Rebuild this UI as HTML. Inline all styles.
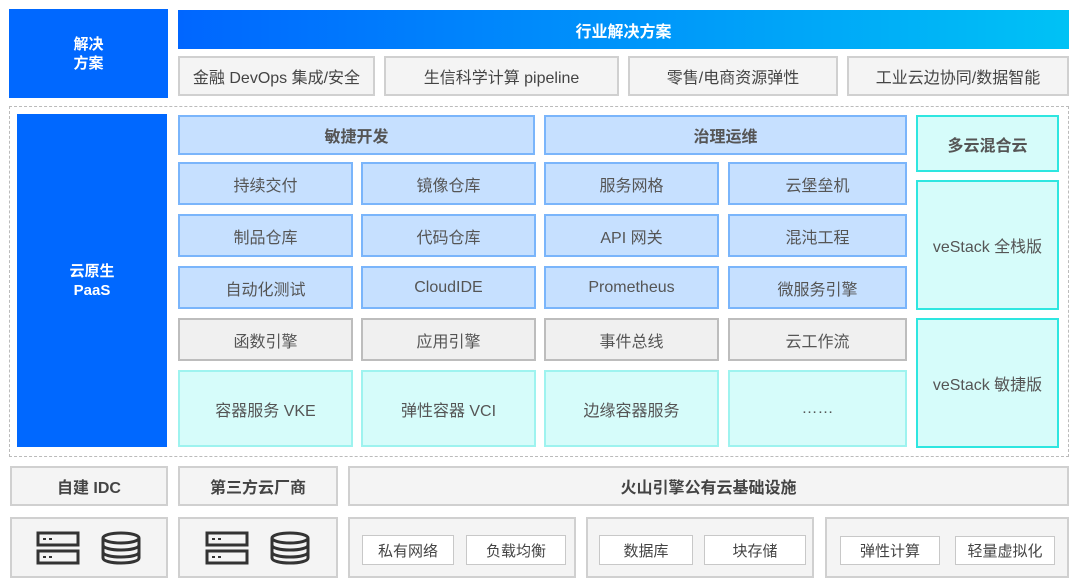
<!DOCTYPE html><html><head><meta charset="utf-8"><style>
*{margin:0;padding:0;box-sizing:border-box}
body{width:1080px;height:587px;background:#fff;position:relative;overflow:hidden;font-family:"Liberation Sans","Noto Sans CJK SC",sans-serif;color:#444}
.b{position:absolute;display:flex;align-items:center;justify-content:center;text-align:center;font-size:16px}
.blue{background:#0068ff;color:#fff;font-weight:bold;font-size:15px;line-height:19px}
.g{background:#f4f4f4;border:2px solid #d0d0d0;color:#444}
.lb{background:#c6e0ff;border:2px solid #7ab5fb;color:#555}
.cy{background:#d6fcfa;border:2px solid #2ee6e0;color:#555}
.cy2{background:#d6fcfa;border:2px solid #9ef3ef;color:#555}
.gr{background:#f0f0f0;border:2px solid #bdbdbd;color:#555}
.bd{font-weight:bold}
.w{background:#fff;border:1px solid #c8c8c8;font-size:15px}
</style></head><body>
<div class="b blue" style="left:9px;top:9px;width:159px;height:89px">解决<br>方案</div>
<div class="b" style="left:178px;top:10px;width:891px;height:39px;background:linear-gradient(90deg,#0066ff,#00c2f5);color:#fff;font-weight:bold;font-size:16px">行业解决方案</div>
<div class="b g" style="left:178px;top:56px;width:197px;height:40px">金融 DevOps 集成/安全</div>
<div class="b g" style="left:384px;top:56px;width:235px;height:40px">生信科学计算 pipeline</div>
<div class="b g" style="left:628px;top:56px;width:210px;height:40px">零售/电商资源弹性</div>
<div class="b g" style="left:847px;top:56px;width:222px;height:40px">工业云边协同/数据智能</div>
<div style="position:absolute;left:9px;top:106px;width:1060px;height:351px;border:1px dashed #bbb"></div>
<div class="b blue" style="left:17px;top:114px;width:150px;height:333px">云原生<br>PaaS</div>
<div class="b lb bd" style="left:178px;top:115px;width:357px;height:40px">敏捷开发</div>
<div class="b lb bd" style="left:544px;top:115px;width:363px;height:40px">治理运维</div>
<div class="b cy bd" style="left:916px;top:115px;width:143px;height:57px">多云混合云</div>
<div class="b lb" style="left:178px;top:162px;width:175px;height:43px">持续交付</div>
<div class="b lb" style="left:361px;top:162px;width:175px;height:43px">镜像仓库</div>
<div class="b lb" style="left:544px;top:162px;width:175px;height:43px">服务网格</div>
<div class="b lb" style="left:728px;top:162px;width:179px;height:43px">云堡垒机</div>
<div class="b lb" style="left:178px;top:214px;width:175px;height:43px">制品仓库</div>
<div class="b lb" style="left:361px;top:214px;width:175px;height:43px">代码仓库</div>
<div class="b lb" style="left:544px;top:214px;width:175px;height:43px">API 网关</div>
<div class="b lb" style="left:728px;top:214px;width:179px;height:43px">混沌工程</div>
<div class="b lb" style="left:178px;top:266px;width:175px;height:43px">自动化测试</div>
<div class="b lb" style="left:361px;top:266px;width:175px;height:43px">CloudIDE</div>
<div class="b lb" style="left:544px;top:266px;width:175px;height:43px">Prometheus</div>
<div class="b lb" style="left:728px;top:266px;width:179px;height:43px">微服务引擎</div>
<div class="b gr" style="left:178px;top:318px;width:175px;height:43px">函数引擎</div>
<div class="b gr" style="left:361px;top:318px;width:175px;height:43px">应用引擎</div>
<div class="b gr" style="left:544px;top:318px;width:175px;height:43px">事件总线</div>
<div class="b gr" style="left:728px;top:318px;width:179px;height:43px">云工作流</div>
<div class="b cy2" style="left:178px;top:370px;width:175px;height:77px">容器服务 VKE</div>
<div class="b cy2" style="left:361px;top:370px;width:175px;height:77px">弹性容器 VCI</div>
<div class="b cy2" style="left:544px;top:370px;width:175px;height:77px">边缘容器服务</div>
<div class="b cy2" style="left:728px;top:370px;width:179px;height:77px">……</div>
<div class="b cy" style="left:916px;top:180px;width:143px;height:130px">veStack 全栈版</div>
<div class="b cy" style="left:916px;top:318px;width:143px;height:130px">veStack 敏捷版</div>
<div class="b g bd" style="left:10px;top:466px;width:158px;height:40px">自建 IDC</div>
<div class="b g bd" style="left:178px;top:466px;width:160px;height:40px">第三方云厂商</div>
<div class="b g bd" style="left:348px;top:466px;width:721px;height:40px">火山引擎公有云基础设施</div>
<div class="b g" style="left:10px;top:517px;width:158px;height:61px;gap:20px"><svg width="44" height="34" viewBox="0 0 44 34" fill="none" stroke="#333" stroke-width="3"><rect x="2" y="2" width="40" height="12"/><rect x="2" y="20" width="40" height="12"/><rect x="7" y="7" width="3" height="2" fill="#333" stroke="none"/><rect x="13" y="7" width="3" height="2" fill="#333" stroke="none"/><rect x="7" y="25" width="3" height="2" fill="#333" stroke="none"/><rect x="13" y="25" width="3" height="2" fill="#333" stroke="none"/></svg><svg width="42" height="36" viewBox="0 0 42 36" fill="none" stroke="#333" stroke-width="3"><ellipse cx="21" cy="8" rx="18" ry="5"/><path d="M3 8v20c0 3 8 5 18 5s18-2 18-5V8M3 15c0 3 8 5 18 5s18-2 18-5M3 22c0 3 8 5 18 5s18-2 18-5"/></svg></div>
<div class="b g" style="left:178px;top:517px;width:160px;height:61px;gap:20px"><svg width="44" height="34" viewBox="0 0 44 34" fill="none" stroke="#333" stroke-width="3"><rect x="2" y="2" width="40" height="12"/><rect x="2" y="20" width="40" height="12"/><rect x="7" y="7" width="3" height="2" fill="#333" stroke="none"/><rect x="13" y="7" width="3" height="2" fill="#333" stroke="none"/><rect x="7" y="25" width="3" height="2" fill="#333" stroke="none"/><rect x="13" y="25" width="3" height="2" fill="#333" stroke="none"/></svg><svg width="42" height="36" viewBox="0 0 42 36" fill="none" stroke="#333" stroke-width="3"><ellipse cx="21" cy="8" rx="18" ry="5"/><path d="M3 8v20c0 3 8 5 18 5s18-2 18-5V8M3 15c0 3 8 5 18 5s18-2 18-5M3 22c0 3 8 5 18 5s18-2 18-5"/></svg></div>
<div class="b g" style="left:348px;top:517px;width:228px;height:61px"></div>
<div class="b g" style="left:586px;top:517px;width:228px;height:61px"></div>
<div class="b g" style="left:825px;top:517px;width:244px;height:61px"></div>
<div class="b w" style="left:362px;top:535px;width:92px;height:30px">私有网络</div>
<div class="b w" style="left:466px;top:535px;width:100px;height:30px">负载均衡</div>
<div class="b w" style="left:599px;top:535px;width:94px;height:30px">数据库</div>
<div class="b w" style="left:704px;top:535px;width:102px;height:30px">块存储</div>
<div class="b w" style="left:840px;top:536px;width:100px;height:29px">弹性计算</div>
<div class="b w" style="left:955px;top:536px;width:100px;height:29px">轻量虚拟化</div>
</body></html>
